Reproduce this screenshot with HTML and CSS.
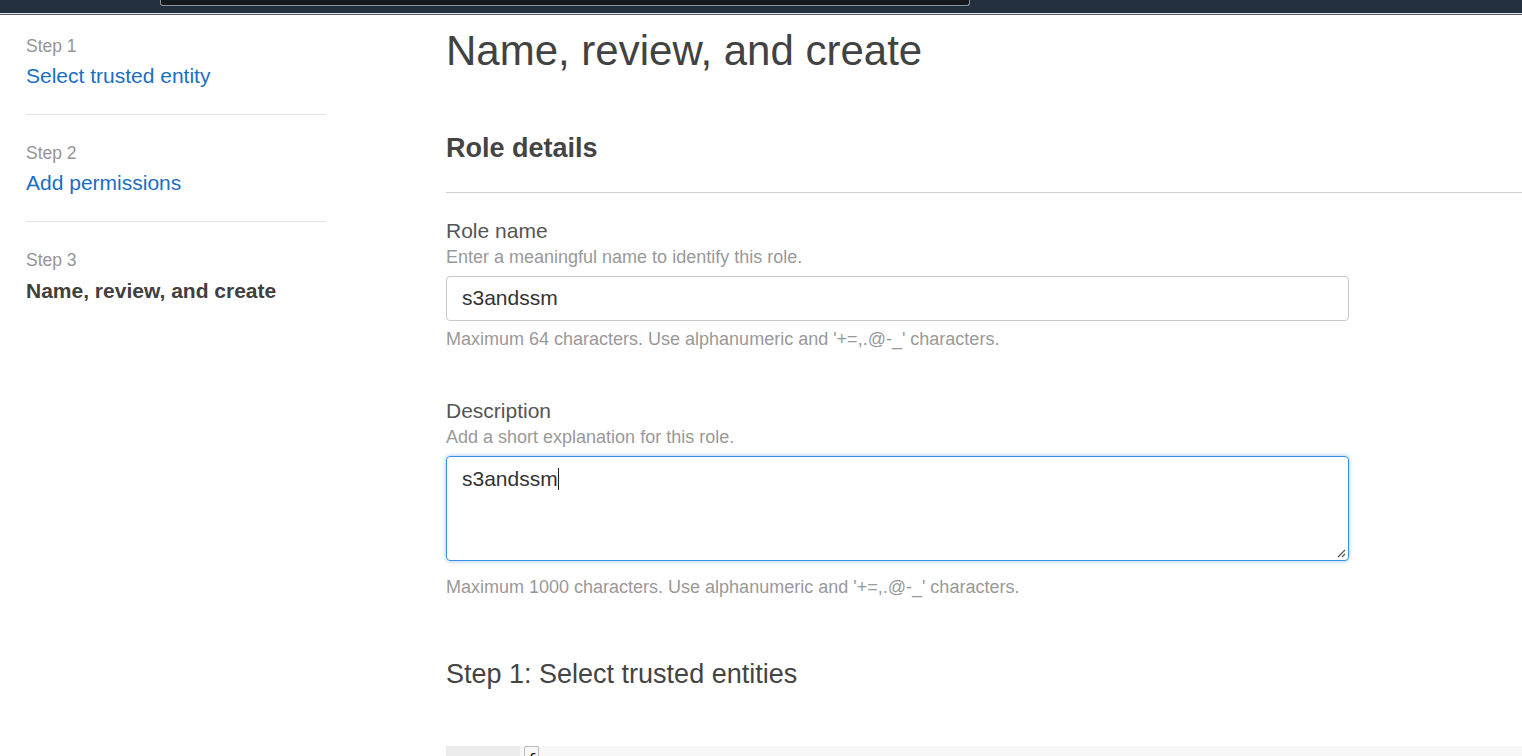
FILE: index.html
```html
<!DOCTYPE html>
<html lang="en">
<head>
<meta charset="utf-8">
<title>Create role</title>
<link rel="stylesheet" href="styles.css">
</head>
<body>
<header class="topbar">
  <div class="search"></div>
</header>
<div class="layout">
  <nav class="sidebar">
    <div class="step">
      <div class="step-num">Step 1</div>
      <a class="step-link" href="#">Select trusted entity</a>
    </div>
    <div class="step">
      <div class="step-num">Step 2</div>
      <a class="step-link" href="#">Add permissions</a>
    </div>
    <div class="step step-current">
      <div class="step-num">Step 3</div>
      <div class="step-title">Name, review, and create</div>
    </div>
  </nav>
  <main class="main">
    <h1 class="page-title">Name, review, and create</h1>
    <h2 class="section-title">Role details</h2>
    <div class="field field-first">
      <div class="label">Role name</div>
      <div class="hint">Enter a meaningful name to identify this role.</div>
      <input class="text-input" type="text" value="s3andssm">
      <div class="constraint">Maximum 64 characters. Use alphanumeric and '+=,.@-_' characters.</div>
    </div>
    <div class="field field-second">
      <div class="label">Description</div>
      <div class="hint">Add a short explanation for this role.</div>
      <div class="textarea"><span class="ta-text">s3andssm</span><span class="caret"></span>
        <svg class="grip" width="10" height="10" viewBox="0 0 10 10"><path d="M9 2 L2 9 M9 6 L6 9" stroke="#555" stroke-width="1.3" fill="none"/></svg>
      </div>
      <div class="constraint constraint-2">Maximum 1000 characters. Use alphanumeric and '+=,.@-_' characters.</div>
    </div>
    <h3 class="sub-title">Step 1: Select trusted entities</h3>
    <div class="editor">
      <div class="gutter">1</div>
      <div class="code"><span class="brace">{</span></div>
    </div>
  </main>
</div>
</body>
</html>
```
FILE: styles.css
```css
html, body {
  margin: 0;
  padding: 0;
  background: #fff;
  overflow: hidden;
  height: 756px;
}
body {
  font-family: "Liberation Sans", Arial, sans-serif;
  color: #444;
}
.topbar {
  height: 13px;
  background: #232f3e;
  border-bottom: 1px solid #e4e6e8;
  box-shadow: 0 1px 0 #545b64;
  margin-bottom: 1px;
  display: flex;
}
.search {
  margin-left: 160px;
  width: 808px;
  height: 5px;
  background: #16191f;
  border: 1px solid #8a939c;
  border-top: none;
  border-radius: 0 0 3px 3px;
}
.layout {
  display: flex;
  padding-left: 26px;
  gap: 120px;
}
.sidebar {
  width: 300px;
  flex: none;
}
.step {
  padding: 27px 0 24px;
  border-bottom: 1px solid #e1e1e1;
}
.step:first-child {
  padding-top: 20px;
}
.step-current {
  border-bottom: none;
  padding-top: 27px;
}
.step-num {
  font-size: 17.5px;
  line-height: 22px;
  color: #959595;
}
.step-link, .step-title {
  display: block;
  margin-top: 5px;
  font-size: 21px;
  line-height: 28px;
  color: #1a6ec4;
  text-decoration: none;
}
.step-title {
  margin-top: 6px;
  color: #404040;
  font-weight: bold;
}
.main {
  flex: 1;
  min-width: 0;
}
.page-title {
  margin: 11px 0 0;
  font-size: 42px;
  line-height: 50px;
  font-weight: normal;
  color: #424242;
}
.section-title {
  margin: 56px 0 0;
  padding-bottom: 28px;
  border-bottom: 1px solid #cfcfcf;
  font-size: 27px;
  line-height: 32px;
  font-weight: bold;
  color: #444;
}
.field-first {
  margin-top: 26px;
}
.field-second {
  margin-top: 49px;
}
.label {
  font-size: 21px;
  line-height: 24px;
  color: #555;
}
.hint {
  margin-top: 3px;
  font-size: 18px;
  line-height: 22px;
  color: #999;
}
.text-input {
  display: block;
  box-sizing: border-box;
  margin: 8px 0 0;
  width: 903px;
  height: 45px;
  padding: 0 15px 1px;
  border: 1px solid #c8c8c8;
  border-radius: 4px;
  font-family: "Liberation Sans", Arial, sans-serif;
  font-size: 21px;
  color: #333;
  outline: none;
}
.constraint {
  margin-top: 7px;
  font-size: 18px;
  line-height: 22px;
  color: #999;
}
.constraint-2 {
  margin-top: 15px;
}
.textarea {
  position: relative;
  box-sizing: border-box;
  margin-top: 8px;
  width: 903px;
  height: 105px;
  padding: 10px 15px;
  border: 1px solid #3a8ee0;
  border-radius: 4px;
  box-shadow: 0 0 4px rgba(58, 142, 224, 0.55);
  font-size: 21px;
  line-height: 24px;
  color: #333;
}
.caret {
  display: inline-block;
  width: 1px;
  height: 22px;
  background: #222;
  vertical-align: -4px;
}
.grip {
  position: absolute;
  right: 2px;
  bottom: 2px;
}
.sub-title {
  margin: 60px 0 0;
  font-size: 27px;
  line-height: 32px;
  font-weight: normal;
  color: #444;
}
.editor {
  margin-top: 56px;
  display: flex;
  height: 40px;
  background: #f7f7f7;
  font-family: "Liberation Mono", monospace;
  font-size: 17px;
  line-height: 22px;
}
.gutter {
  width: 74px;
  box-sizing: border-box;
  padding: 6px 26px 0 0;
  text-align: right;
  background: #ebebeb;
  color: #333;
}
.code {
  padding: 0 0 0 4px;
}
.brace {
  display: inline-block;
  box-sizing: border-box;
  width: 15px;
  height: 24px;
  border: 1px solid #bbb;
  border-radius: 2px;
  text-align: center;
  line-height: 28px;
  color: #111;
}
```
